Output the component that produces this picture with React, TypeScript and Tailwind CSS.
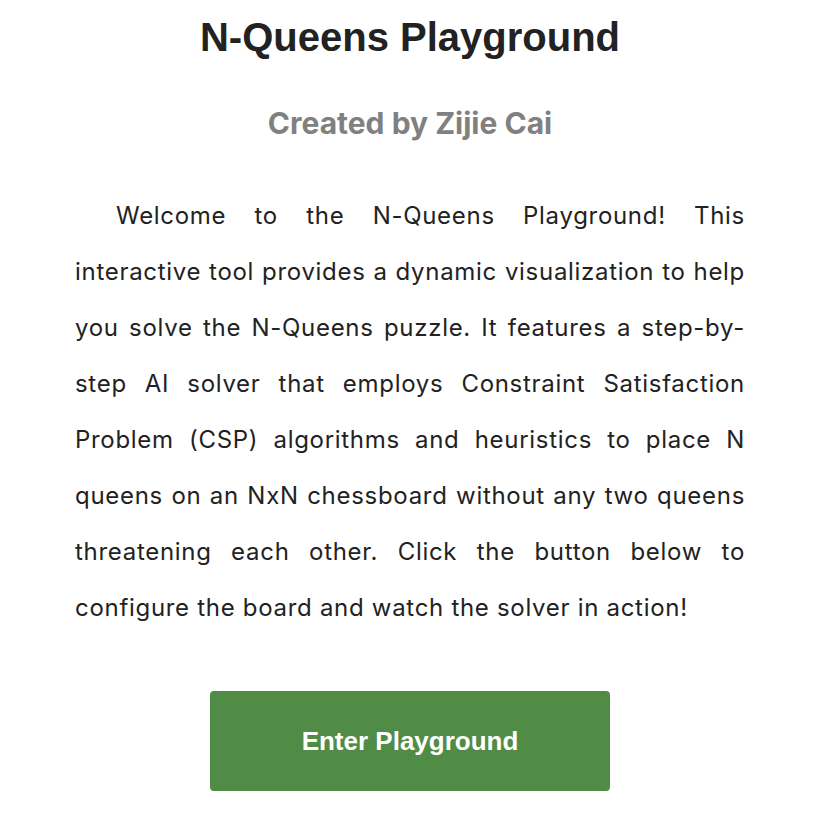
const lines = [
  "Welcome to the N-Queens Playground! This",
  "interactive tool provides a dynamic visualization to help",
  "you solve the N-Queens puzzle. It features a step-by-",
  "step AI solver that employs Constraint Satisfaction",
  "Problem (CSP) algorithms and heuristics to place N",
  "queens on an NxN chessboard without any two queens",
  "threatening each other. Click the button below to",
];

export default function App() {
  return (
    <div className="min-h-screen bg-white flex flex-col items-center">
      <h1 className="mt-[14px] text-[40px] leading-[46px] font-bold text-[#222] font-['Liberation_Sans',Arial,sans-serif]">
        N-Queens Playground
      </h1>
      <h2 className="mt-[46px] text-[30px] leading-[34px] font-bold text-[#808080] font-['Inter',sans-serif]">
        Created by Zijie Cai
      </h2>
      <p className="mt-[48px] w-[670px] text-[24px] leading-[56px] tracking-[0.7px] text-[#222] font-['Inter',sans-serif]">
        {lines.map((line, i) => (
          <span
            key={i}
            className={`block text-justify [text-align-last:justify] ${i === 0 ? "pl-[41px]" : ""}`}
          >
            {line}
          </span>
        ))}
        <span className="block">
          configure the board and watch the solver in action!
        </span>
      </p>
      <button className="mt-[55px] w-[400px] h-[100px] rounded-[4px] bg-[#508c46] text-white text-[26px] font-bold font-['Liberation_Sans',Arial,sans-serif]">
        Enter Playground
      </button>
    </div>
  );
}
